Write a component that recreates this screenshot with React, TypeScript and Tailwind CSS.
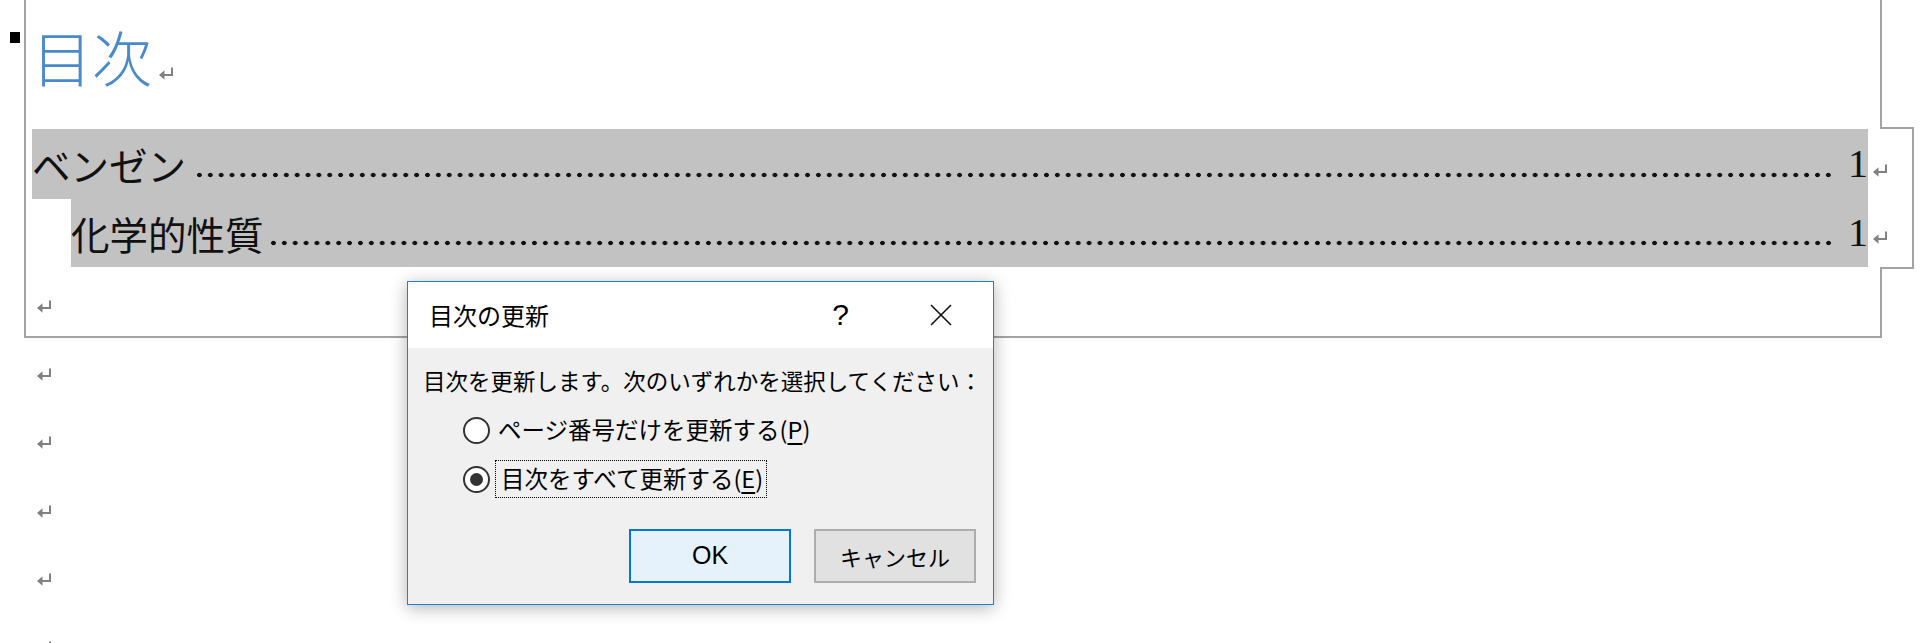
import React from 'react';

const Mark: React.FC<{ className?: string }> = ({ className = '' }) => (
  <svg width="15" height="13" viewBox="0 0 15 13" className={`shrink-0 ${className}`}>
    <path d="M13 0.5V8H4.5" stroke="#808080" strokeWidth="2" fill="none" />
    <path d="M0 8L5.5 3.2V12.8Z" fill="#808080" />
  </svg>
);

const Leader: React.FC<{ className?: string }> = ({ className = '' }) => (
  <div
    className={`flex-1 h-[6px] bg-[radial-gradient(circle,#111_2px,transparent_2.6px)] bg-size-[10.9px_6px] [background-repeat:round_no-repeat] ${className}`}
  />
);

const Radio: React.FC<{ checked?: boolean }> = ({ checked }) => (
  <span className="w-[27px] h-[27px] rounded-full border-2 border-[#333] bg-white flex items-center justify-center shrink-0">
    {checked && <span className="w-[13px] h-[13px] rounded-full bg-[#333]" />}
  </span>
);

const App: React.FC = () => {
  const rowsBelow = [0, 1, 2, 3, 4];

  return (
    <div className="relative w-[1922px] h-[643px] overflow-hidden bg-white">
      {/* small handle in the margin */}
      <div className="absolute left-[10px] top-[32px] w-[10px] h-[11px] bg-black" />

      <div className="ml-[24px] w-[1858px] border-l-2 border-b-2 border-[#a3a3a3]">
        {/* heading */}
        <div className="h-[127px] border-r-2 border-[#a3a3a3] flex items-start pt-[26px] pl-[6px]">
          <span className="font-['Noto_Sans_CJK_JP',sans-serif] font-light text-[60px] leading-none text-[#4a8acb]">目次</span>
          <Mark className="ml-[7px] mt-[41px]" />
        </div>

        {/* toc field */}
        <div className="flex w-[1888px]">
          <div className="w-[1854px] shrink-0 pt-[2px] pb-[2px] flex flex-col">
            <div className="h-[70px] flex items-center">
              <div className="ml-[6px] w-[1836px] shrink-0 h-full bg-[#c2c2c2] flex items-center font-['Noto_Sans_CJK_JP',sans-serif] text-[38.5px] leading-none text-[#111]">
                <span className="whitespace-nowrap">ベンゼン</span>
                <Leader className="ml-[8px] mr-[12px] translate-y-[11px]" />
                <span className="font-['Liberation_Serif',serif] text-[40px] w-[20px] shrink-0">1</span>
              </div>
              <Mark className="ml-[5px] translate-y-[6px]" />
            </div>
            <div className="h-[68px] flex items-center">
              <div className="ml-[45px] w-[1797px] shrink-0 h-full bg-[#c2c2c2] flex items-center font-['Noto_Sans_CJK_JP',sans-serif] text-[38.5px] leading-none text-[#111]">
                <span className="whitespace-nowrap">化学的性質</span>
                <Leader className="ml-[4.5px] mr-[12px] translate-y-[10px]" />
                <span className="font-['Liberation_Serif',serif] text-[40px] w-[20px] shrink-0">1</span>
              </div>
              <Mark className="ml-[5px] translate-y-[4px]" />
            </div>
          </div>
          <div className="w-[34px] shrink-0 border-t-2 border-r-2 border-b-2 border-[#a3a3a3]" />
        </div>

        <div className="h-[67px] border-r-2 border-[#a3a3a3] pl-[11px] pt-[31px]">
          <Mark />
        </div>
      </div>

      {rowsBelow.map((i) => (
        <div key={i} className="h-[68.25px] pl-[37px] pt-[30px]">
          <Mark />
        </div>
      ))}

      {/* dialog */}
      <div className="absolute left-[407px] top-[281px] w-[587px] h-[324px] border border-[#1e7fd4] bg-[#f0f0f0] shadow-[0_3px_16px_rgba(0,0,0,0.3)] flex flex-col font-['Noto_Sans_CJK_JP',sans-serif] text-black">
        <div className="h-[66px] bg-white flex items-center pl-[21px] shrink-0">
          <span className="text-[24px] whitespace-nowrap">目次の更新</span>
          <div className="flex-1" />
          <span className="font-['Liberation_Sans',sans-serif] text-[30px] leading-none">?</span>
          <svg width="22" height="22" viewBox="0 0 22 22" className="ml-[81px] mr-[41px]">
            <path d="M1 1L21 21M21 1L1 21" stroke="#111" strokeWidth="1.6" />
          </svg>
        </div>

        <div className="flex-1 flex flex-col pl-[15px]">
          <div className="mt-[17px] h-[30px] leading-[30px] text-[22.5px] whitespace-nowrap">
            目次を更新します。次のいずれかを選択してください：
          </div>

          <div className="mt-[15px] h-[40px] ml-[40px] flex items-center text-[23.5px]">
            <Radio />
            <span className="ml-[8px] leading-none whitespace-nowrap">
              ページ番号だけを更新する(<span className="underline underline-offset-4">P</span>)
            </span>
          </div>

          <div className="mt-[9px] h-[40px] ml-[40px] flex items-center text-[23.5px]">
            <Radio checked />
            <span className="ml-[5px] h-[38px] pl-[5px] pr-[3px] flex items-center border border-dotted border-black leading-none whitespace-nowrap">
              目次をすべて更新する(<span className="underline underline-offset-4">E</span>)
            </span>
          </div>

          <div className="mt-[30px] flex justify-end gap-[23px] pr-[17px]">
            <button className="w-[162px] h-[54px] border-2 border-[#0078d7] bg-[#e5f1fb] font-['Liberation_Sans',sans-serif] text-[25px]">OK</button>
            <button className="w-[162px] h-[54px] border-2 border-[#adadad] bg-[#e1e1e1] text-[22px]">キャンセル</button>
          </div>
        </div>
      </div>
    </div>
  );
};

export default App;
